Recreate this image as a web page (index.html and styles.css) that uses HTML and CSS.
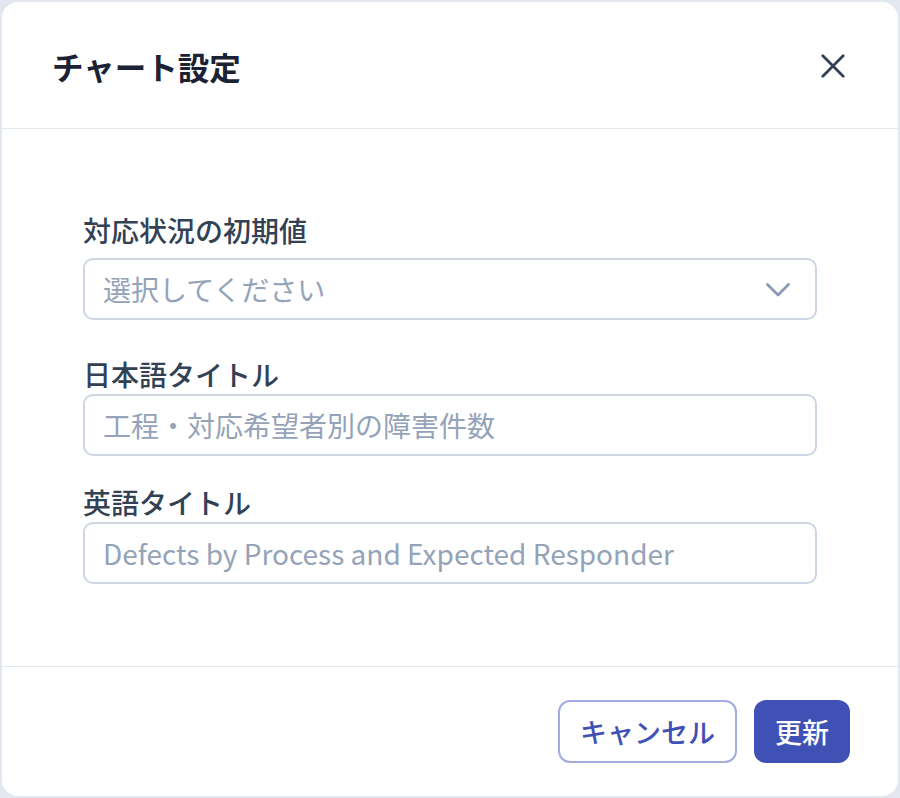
FILE: index.html
```html
<!DOCTYPE html>
<html lang="ja">
<head>
<meta charset="utf-8">
<title>チャート設定</title>
<link rel="stylesheet" href="styles.css">
</head>
<body>
<div class="dialog">
  <div class="header">
    <h2 class="title">チャート設定</h2>
    <button class="close" aria-label="閉じる">
      <svg width="24" height="24" viewBox="0 0 24 24" fill="none" stroke="#334155" stroke-width="2.8" stroke-linecap="round"><path d="M1.8 1.8L22.2 22.2M22.2 1.8L1.8 22.2"/></svg>
    </button>
  </div>
  <div class="body">
    <div class="field">
      <label class="label">対応状況の初期値</label>
      <div class="control select">
        <span class="placeholder">選択してください</span>
        <svg class="chev" width="24" height="14" viewBox="0 0 24 14" fill="none" stroke="#8a9ab3" stroke-width="2.8" stroke-linecap="round" stroke-linejoin="round"><path d="M1.5 1.5L12 12L22.5 1.5"/></svg>
      </div>
    </div>
    <div class="field">
      <label class="label">日本語タイトル</label>
      <div class="control"><span class="placeholder">工程・対応希望者別の障害件数</span></div>
    </div>
    <div class="field">
      <label class="label">英語タイトル</label>
      <div class="control"><span class="placeholder">Defects by Process and Expected Responder</span></div>
    </div>
  </div>
  <div class="footer">
    <button class="btn btn-outline">キャンセル</button>
    <button class="btn btn-primary">更新</button>
  </div>
</div>
</body>
</html>
```
FILE: styles.css
```css
* { box-sizing: border-box; }
html, body { margin: 0; padding: 0; }
body {
  background: #e3e8f0;
  font-family: "Noto Sans CJK JP", "Noto Sans", sans-serif;
  height: 798px;
  overflow: hidden;
  padding: 2px;
}
.dialog {
  width: 896px;
  height: 794px;
  background: #ffffff;
  border-radius: 16px;
  display: flex;
  flex-direction: column;
  overflow: hidden;
}
.header {
  height: 127px;
  flex: none;
  border-bottom: 1.5px solid #e2e8f0;
  display: flex;
  align-items: center;
  justify-content: space-between;
  padding: 2px 53px 0 50px;
}
.title {
  margin: 0;
  font-size: 31.5px;
  font-weight: 700;
  color: #1a2233;
  line-height: 40px;
}
.close {
  border: 0;
  background: none;
  padding: 0;
  width: 24px;
  height: 24px;
  display: flex;
}
.body {
  flex: 1;
  padding: 81px 81px 0 81px;
  display: flex;
  flex-direction: column;
  gap: 26px;
}
.field { display: flex; flex-direction: column; }
.label {
  font-size: 28px;
  line-height: 40px;
  font-weight: 500;
  color: #334155;
}
.control {
  height: 62px;
  border: 2px solid #cdd6e2;
  border-radius: 10px;
  display: flex;
  align-items: center;
  padding: 0 25px 0 18px;
}
.control.select {
  margin: 8px 0;
  justify-content: space-between;
}
.placeholder {
  font-size: 28px;
  color: #94a3b8;
  line-height: 1;
}
.chev { margin-top: 2px; }
.footer {
  flex: none;
  height: 130px;
  border-top: 1.5px solid #e2e8f0;
  display: flex;
  justify-content: flex-end;
  align-items: center;
  gap: 17px;
  padding: 0 48px 0 0;
}
.btn {
  height: 63px;
  border-radius: 12px;
  font-family: "Noto Sans CJK JP", "Noto Sans", sans-serif;
  font-size: 27px;
  font-weight: 500;
  padding: 0 20px;
  line-height: 1;
}
.btn-outline {
  background: #ffffff;
  border: 2px solid #a3acdf;
  color: #3f51b5;
}
.btn-primary {
  background: #3f51b5;
  border: 0;
  color: #ffffff;
  padding: 0 21px;
}
```
